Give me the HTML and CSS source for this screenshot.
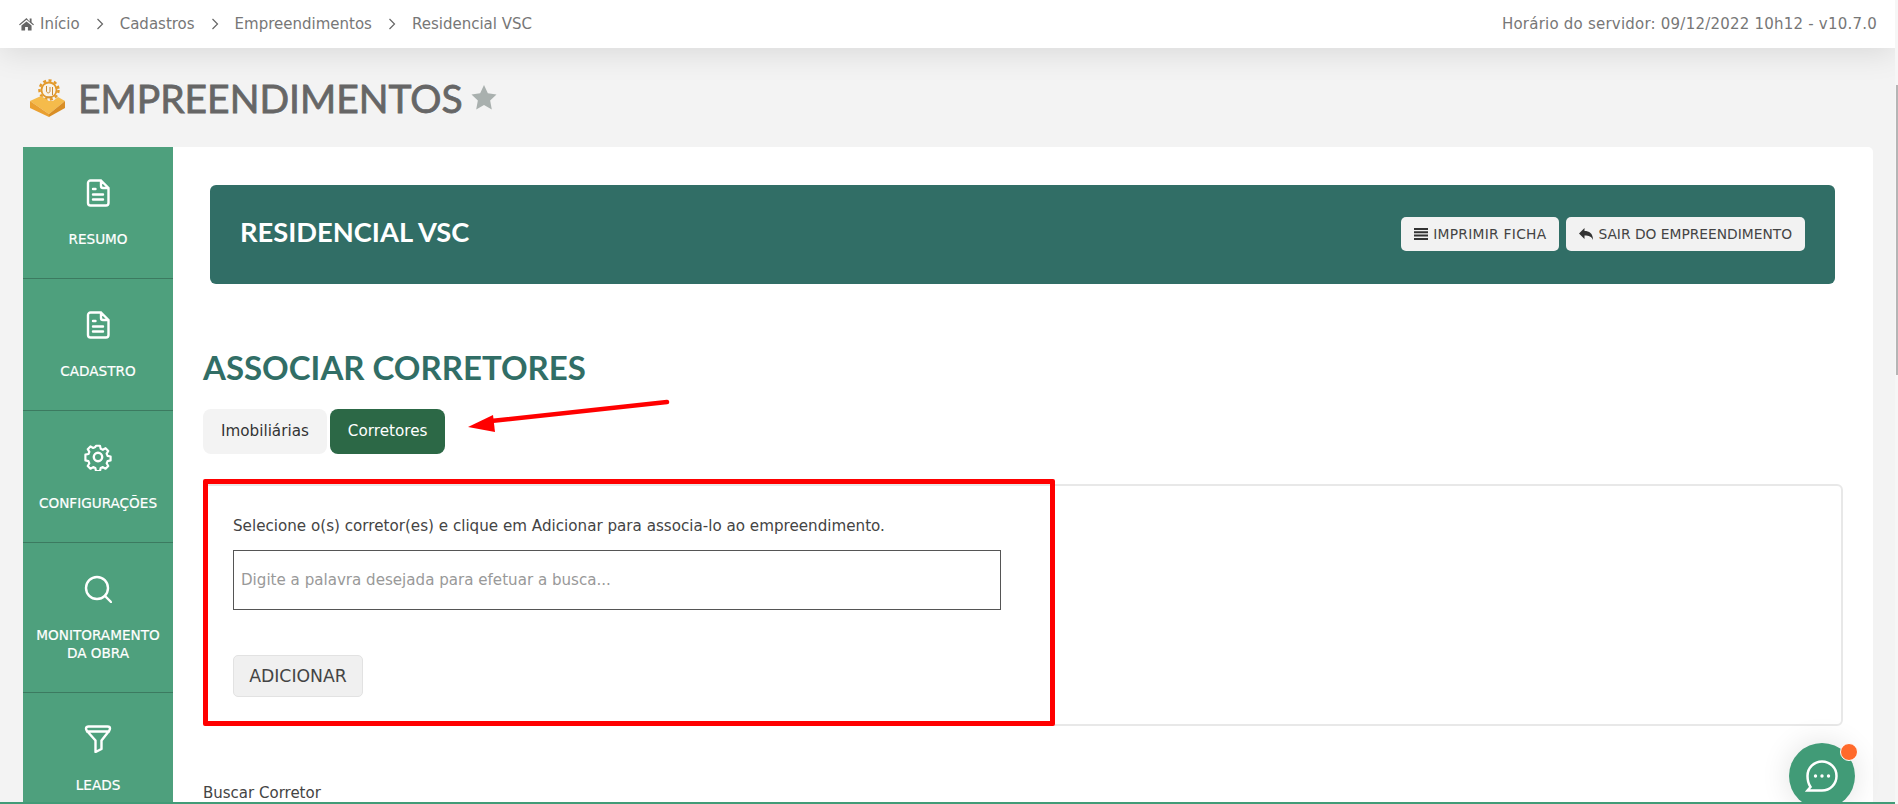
FILE: index.html
```html
<!DOCTYPE html>
<html lang="pt-BR">
<head>
    <meta charset="UTF-8">
    <meta name="viewport" content="width=device-width, initial-scale=1.0">
    <title>Empreendimentos</title>
    <link rel="stylesheet" href="styles.css">
</head>
<body>

<header class="topbar">
    <nav class="breadcrumb">
        <svg class="icon-home" viewBox="0 0 16 14"><path d="M8 .6 0 7.4l.9 1L8 2.5l7.1 5.9.9-1-2.6-2.2V1.2h-2v3.3zM2.6 8.7V14h3.9v-3.7h3V14h3.9V8.7L8 4.2z" fill="#666"/></svg>
        <span>Início</span>
        <svg class="icon-chevron" viewBox="0 0 8 12"><path d="M1.5 1l5 5-5 5" fill="none" stroke="#666" stroke-width="1.2"/></svg>
        <span>Cadastros</span>
        <svg class="icon-chevron" viewBox="0 0 8 12"><path d="M1.5 1l5 5-5 5" fill="none" stroke="#666" stroke-width="1.2"/></svg>
        <span>Empreendimentos</span>
        <svg class="icon-chevron" viewBox="0 0 8 12"><path d="M1.5 1l5 5-5 5" fill="none" stroke="#666" stroke-width="1.2"/></svg>
        <span>Residencial VSC</span>
    </nav>
    <div class="server-time">Horário do servidor: 09/12/2022 10h12 - v10.7.0</div>
</header>

<div class="page-title">
    <svg class="logo" viewBox="0 0 40 40">
        <circle cx="21" cy="12" r="9.500" fill="none" stroke="#e39a2c" stroke-width="2.500" stroke-dasharray="3 2.500"/>
        <circle cx="21" cy="12" r="7.500" fill="#f8f3e8" stroke="#e39a2c" stroke-width="1.800"/>
        <path d="M18.500 8v5c0 2.500 3.500 2.500 3.500 0V9M24.500 9v8M18 19h6" fill="none" stroke="#c98a35" stroke-width="1"/>
        <path d="M2 23l11-5 8 5 4 0 5-4 7 4-16 13z" fill="#f5bb4b"/>
        <path d="M2 23l19 13v3L2 30z" fill="#eaa030"/>
        <path d="M21 36l16-13v7L21 39z" fill="#d98e26"/>
    </svg>
    <h1>EMPREENDIMENTOS</h1>
    <svg class="star" viewBox="0 0 24 24"><path d="M12 0l3.700 8 8.300 1-6.100 5.800 1.600 8.700L12 19.100 4.500 23.500l1.600-8.700L0 9l8.300-1z" fill="#a9b0ae"/></svg>
</div>

<div class="layout">
    <!-- Menu lateral -->
    <aside class="sidebar">
        <div class="side-item">
            <svg class="side-icon" viewBox="0 0 24 28"><path d="M4.500 1.500h10.500l7.500 7.500v15a2.500 2.500 0 0 1-2.500 2.500H4.500A2.500 2.500 0 0 1 2 24V4a2.500 2.500 0 0 1 2.500-2.500zM15 1.500V7a2 2 0 0 0 2 2h5.500M7 10h2.500M7 15.500h10M7 20.500h10"/></svg>
            <span>RESUMO</span>
        </div>
        <div class="side-item">
            <svg class="side-icon" viewBox="0 0 24 28"><path d="M4.500 1.500h10.500l7.500 7.500v15a2.500 2.500 0 0 1-2.500 2.500H4.500A2.500 2.500 0 0 1 2 24V4a2.500 2.500 0 0 1 2.500-2.500zM15 1.500V7a2 2 0 0 0 2 2h5.500M7 10h2.500M7 15.500h10M7 20.500h10"/></svg>
            <span>CADASTRO</span>
        </div>
        <div class="side-item">
            <svg class="side-icon" viewBox="0 0 28 28"><circle cx="14" cy="14" r="4.200"/><path d="M11.800 1.500h4.400l.8 3.400 2.400 1.100 3-1.800 3 3.100-1.800 3 1 2.400 3.400.7v4.400l-3.400.8-1 2.400 1.800 3-3 3-3-1.800-2.400 1-.8 3.400h-4.400l-.8-3.400-2.400-1-3 1.800-3-3 1.800-3-1-2.400-3.400-.8V11.400l3.400-.7 1-2.400-1.800-3 3-3.100 3 1.800 2.400-1.100z" transform="translate(1.400 1.400) scale(.9)"/></svg>
            <span>CONFIGURAÇÕES</span>
        </div>
        <div class="side-item">
            <svg class="side-icon" viewBox="0 0 28 28"><circle cx="13" cy="13" r="11"/><path d="M21 21l6 6"/></svg>
            <span>MONITORAMENTO<br>DA OBRA</span>
        </div>
        <div class="side-item">
            <svg class="side-icon" viewBox="0 0 28 28"><path d="M2 3.500C2 2 3 1.500 4.500 1.500h19C25 1.500 26 2 26 3.500c0 1-.3 1.500-1 2.500l-7.500 9.500v8.500l-6 3V15.500L3 6C2.300 5 2 4.500 2 3.500zM3 6.500h22"/></svg>
            <span>LEADS</span>
        </div>
    </aside>

    <!-- Área de conteúdo -->
    <main class="content">
        <div class="banner">
            <h2>RESIDENCIAL VSC</h2>
            <div class="banner-actions">
                <button class="btn-light btn-print">
                    <svg class="btn-icon" viewBox="0 0 14 12"><path d="M0 0h14v2H0zM0 3.300h14v2H0zM0 6.600h14v2H0zM0 9.900h14v2H0z" fill="#333"/></svg>
                    IMPRIMIR FICHA
                </button>
                <button class="btn-light">
                    <svg class="btn-icon" viewBox="0 0 14 12"><path d="M5.500 0v3C10 3 14 5 14 12c-1.500-3.500-4-4.500-8.500-4.500V11L0 5.500z" fill="#333"/></svg>
                    SAIR DO EMPREENDIMENTO
                </button>
            </div>
        </div>

        <h3 class="section-title">ASSOCIAR CORRETORES</h3>

        <div class="tabs">
            <div class="tab">Imobiliárias</div>
            <div class="tab active">Corretores</div>
        </div>

        <div class="card">
            <p>Selecione o(s) corretor(es) e clique em Adicionar para associa-lo ao empreendimento.</p>
            <input class="search-input" type="text" placeholder="Digite a palavra desejada para efetuar a busca...">
            <button class="btn-add">ADICIONAR</button>
            <div class="highlight-box"></div>
        </div>

        <div class="search-label">Buscar Corretor</div>

        <svg class="arrow" viewBox="0 0 210 36"><path d="M202 3 26 22" stroke="#f00" stroke-width="4.500" stroke-linecap="round" fill="none"/><path d="M3 28l25-12 2 17z" fill="#f00"/></svg>
    </main>
</div>

<div class="scroll-track"><div class="scroll-thumb"></div></div>

<div class="chat-btn">
    <svg viewBox="0 0 34 34"><path d="M17 2.500c8 0 14.500 6.300 14.500 14.500S25 31.500 17 31.500H2.500l3-3.500C3.500 25 2.500 21 2.500 17 2.500 8.800 9 2.500 17 2.500z" fill="none" stroke="#fff" stroke-width="2.500"/><circle cx="10.500" cy="17" r="1.700" fill="#fff"/><circle cx="17" cy="17" r="1.700" fill="#fff"/><circle cx="23.500" cy="17" r="1.700" fill="#fff"/></svg>
    <span class="chat-dot"></span>
</div>
<div class="bottom-line"></div>

</body>
</html>
```

FILE: styles.css
```css
body {
    font-family: "DejaVu Sans", Verdana, sans-serif;
    margin: 0;
    height: 804px;
    overflow: hidden;
    background-color: #f3f3f3;
    color: #444;
}
/* Barra superior */
.topbar {
    background-color: #ffffff;
    height: 48px;
    margin-right: 3px;
    padding: 0 18px 0 19px;
    display: flex;
    align-items: center;
    justify-content: space-between;
    font-size: 15px;
    color: #777;
    box-shadow: 0 6px 30px rgba(0, 0, 0, 0.1);
    position: relative;
}
.breadcrumb {
    display: flex;
    align-items: center;
}
.icon-home {
    width: 15px;
    height: 14px;
    margin-right: 6px;
}
.icon-chevron {
    width: 8px;
    height: 12px;
    margin: 0 16px;
}
.server-time {
    letter-spacing: 0.22px;
}
.page-title {
    height: 99px;
    display: flex;
    align-items: center;
    padding-left: 28px;
    box-sizing: border-box;
}
.logo {
    width: 40px;
    height: 40px;
    margin-right: 10px;
}
.page-title h1 {
    font-family: Lato, sans-serif;
    font-weight: 400;
    font-size: 39px;
    color: #666;
    -webkit-text-stroke: 0.8px #666;
    margin: 0;
}
.star {
    width: 26px;
    height: 25px;
    margin-left: 8px;
}
.layout {
    display: flex;
    margin-left: 23px;
    margin-right: 25px;
    height: 657px;
}
/* Menu lateral */
.sidebar {
    width: 150px;
    background-color: #4ea07d;
    flex-shrink: 0;
}
.side-item {
    height: 132px;
    border-bottom: 1px solid #3c7a60;
    box-sizing: border-box;
    display: flex;
    flex-direction: column;
    align-items: center;
    color: #fff;
    font-size: 13.6px;
    line-height: 18px;
    text-align: center;
    -webkit-text-stroke: 0.2px #fff;
    padding-top: 32px;
}
.side-item:nth-child(4) {
    height: 150px;
}
.side-icon {
    width: 28px;
    height: 28px;
    fill: none;
    stroke: #fff;
    stroke-width: 2.4;
    stroke-linejoin: round;
    stroke-linecap: round;
    margin-bottom: 23px;
}
/* Área de conteúdo */
.content {
    flex: 1;
    background-color: #ffffff;
    border-top-right-radius: 5px;
    padding: 38px 30px 0 30px;
    position: relative;
    overflow: hidden;
}
.banner {
    background-color: #316e66;
    border-radius: 6px;
    height: 99px;
    margin-left: 7px;
    margin-right: 8px;
    display: flex;
    justify-content: space-between;
    align-items: center;
    padding: 0 30px;
    box-sizing: border-box;
}
.banner h2 {
    font-family: Lato, sans-serif;
    font-size: 27.3px;
    font-weight: 700;
    color: #fff;
    margin: 0 0 7px 0;
}
.banner-actions {
    display: flex;
    gap: 7px;
    margin-bottom: 2px;
}
.btn-light {
    background-color: #f2f2f2;
    border: 0;
    border-radius: 5px;
    height: 34px;
    padding: 0 13px;
    font-family: "DejaVu Sans", Verdana, sans-serif;
    font-size: 13.8px;
    color: #444;
    display: flex;
    align-items: center;
}
.btn-print {
    letter-spacing: 0.28px;
}
.btn-icon {
    width: 14px;
    height: 12px;
    margin-right: 5px;
}
.section-title {
    font-family: Lato, sans-serif;
    font-size: 33px;
    font-weight: 700;
    color: #316e66;
    margin: 63px 0 0 0;
    line-height: 40px;
}
.tabs {
    display: flex;
    gap: 3px;
    margin-top: 22px;
}
.tab {
    height: 45px;
    line-height: 45px;
    padding: 0 18px;
    border-radius: 8px;
    background-color: #f3f3f3;
    color: #333;
    font-size: 15.2px;
}
.tab.active {
    background-color: #2c6846;
    color: #fff;
}
.card {
    margin-top: 30px;
    height: 242px;
    border: 2px solid #e8e8e8;
    border-radius: 6px;
    box-sizing: border-box;
    padding: 30px 28px;
    position: relative;
}
.card p {
    margin: 0;
    font-size: 15.15px;
    line-height: 20px;
}
.search-input {
    display: block;
    width: 768px;
    height: 60px;
    box-sizing: border-box;
    margin-top: 14px;
    border: 1px solid #555;
    padding: 0 7px;
    font-family: "DejaVu Sans", Verdana, sans-serif;
    font-size: 15.1px;
}
.search-input::placeholder {
    color: #999;
}
.btn-add {
    display: block;
    margin-top: 45px;
    width: 130px;
    height: 42px;
    padding: 0;
    background-color: #f0f0f0;
    border: 1px solid #e2e2e2;
    border-radius: 5px;
    font-family: "DejaVu Sans", Verdana, sans-serif;
    font-size: 17.3px;
    color: #444;
}
/* Marcações vermelhas por cima da tela */
.highlight-box {
    position: absolute;
    left: -2px;
    top: -7px;
    width: 852px;
    height: 247px;
    box-sizing: border-box;
    border: 5px solid #f00;
    border-radius: 2px;
}
.arrow {
    position: absolute;
    left: 292px;
    top: 252px;
    width: 210px;
    height: 36px;
}
.search-label {
    margin-top: 58px;
    font-size: 15px;
    color: #444;
}
/* Barra de rolagem */
.scroll-track {
    position: fixed;
    right: 0;
    top: 0;
    width: 3px;
    height: 804px;
    background-color: #f6f6f6;
}
.scroll-thumb {
    position: absolute;
    right: 0;
    top: 85px;
    width: 2px;
    height: 290px;
    background-color: #b5b5b5;
}
.chat-btn {
    position: fixed;
    left: 1789px;
    top: 743px;
    width: 66px;
    height: 66px;
    border-radius: 50%;
    background-color: #419b77;
    box-shadow: 0 0 30px rgba(0, 0, 0, 0.12);
    display: flex;
    align-items: center;
    justify-content: center;
}
.chat-btn svg {
    width: 34px;
    height: 34px;
}
.chat-dot {
    position: absolute;
    left: 51px;
    top: 0;
    width: 16px;
    height: 16px;
    border-radius: 50%;
    background-color: #ff6a2b;
    border: 1px solid #fff;
}
.bottom-line {
    position: fixed;
    left: 0;
    bottom: 0;
    width: 1895px;
    height: 2px;
    background-color: #419b77;
}
```
